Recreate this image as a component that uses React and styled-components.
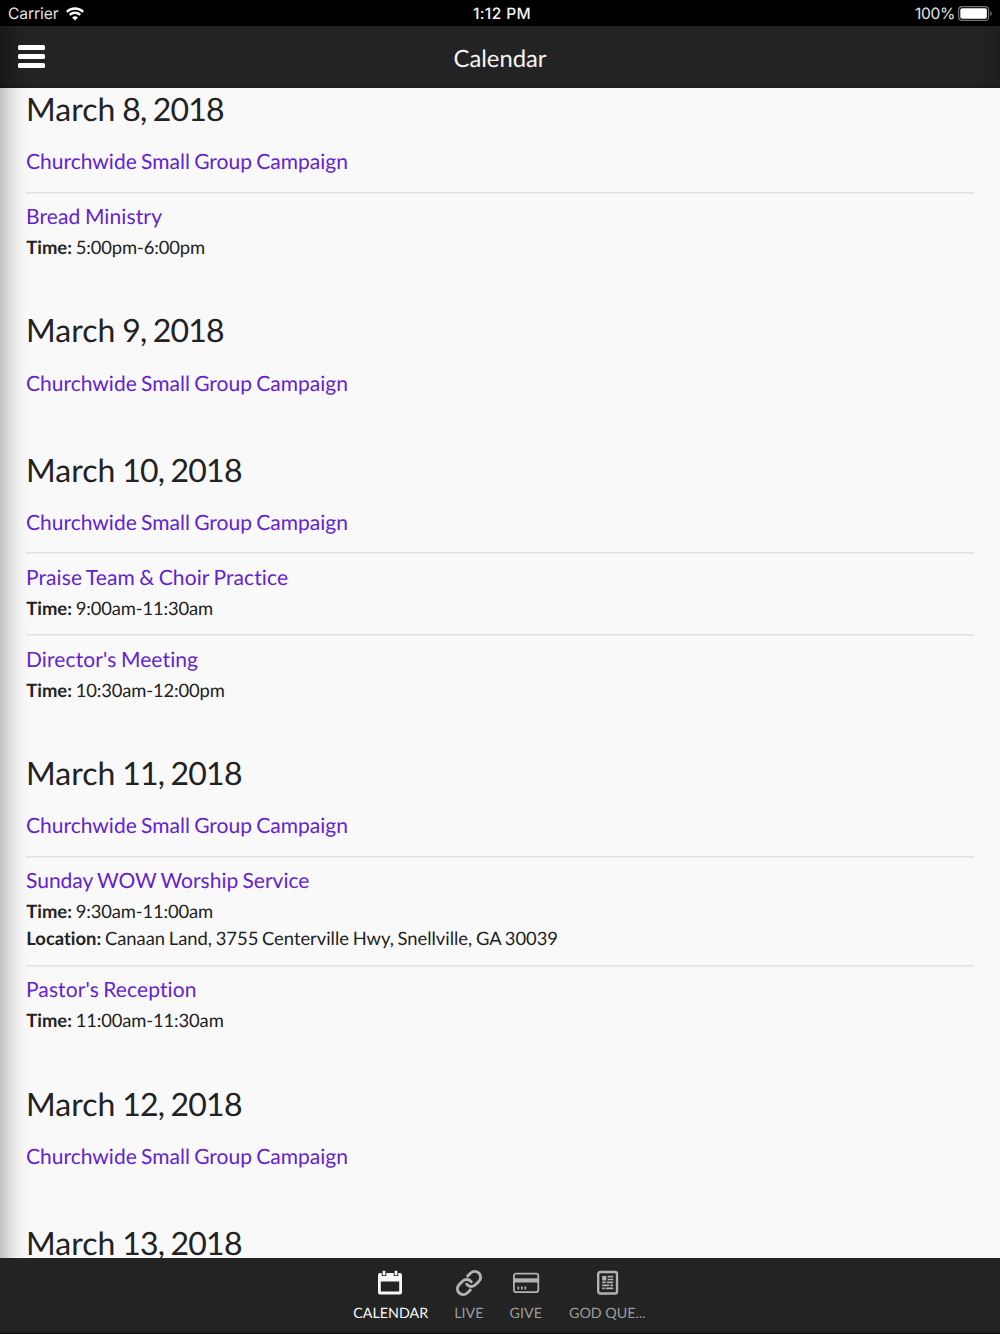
import React from "react";
import styled, { createGlobalStyle } from "styled-components";

const GlobalStyle = createGlobalStyle`
  *, *::before, *::after { box-sizing: border-box; }
  body {
    margin: 0;
    background: #f9f9f9;
    font-family: Lato, sans-serif;
    font-variant-ligatures: none;
    text-rendering: geometricPrecision;
    color: #222;
    overflow: hidden;
  }
`;

const Screen = styled.div`
  display: flex;
  flex-direction: column;
  width: 1000px;
  height: 1334px;
  overflow: hidden;
`;

const StatusBar = styled.div`
  display: grid;
  grid-template-columns: 1fr auto 1fr;
  align-items: center;
  flex: none;
  height: 26px;
  padding: 1px 7px 0 8px;
  background: #000;
  color: #e4e4e4;
  font: 400 15.6px/25px Inter, sans-serif;
`;

const StatusGroup = styled.div`
  display: flex;
  align-items: center;
  justify-content: ${(p) => (p.$end ? "flex-end" : "flex-start")};
  gap: ${(p) => (p.$end ? "3px" : "8px")};
  letter-spacing: ${(p) => (p.$end ? "-0.35px" : "-0.1px")};
`;

const Clock = styled.div`
  font-weight: 500;
  font-size: 15.5px;
  letter-spacing: 0.4px;
  color: #f4f4f4;
  padding-left: 3px;
`;

const Header = styled.header`
  display: grid;
  grid-template-columns: 1fr auto 1fr;
  align-items: center;
  flex: none;
  height: 62px;
  padding: 0 18px;
  background: linear-gradient(to right, #191919 0, #202020 18px, #232323 32px, #232323 970px, #1f1f1f 100%);
  box-shadow: inset 0 -5px 5px -4px rgba(0, 0, 0, 0.18);
`;

const MenuButton = styled.button`
  display: flex;
  flex-direction: column;
  gap: 4px;
  width: 27px;
  padding: 0;
  margin-top: -1px;
  border: 0;
  background: none;
`;

const MenuLine = styled.span`
  height: 5px;
  border-radius: 1.5px;
  background: #fff;
`;

const Title = styled.h1`
  margin: 4px 0 0;
  font-size: 23.8px;
  font-weight: 400;
  line-height: 30px;
  color: #f4f4f4;
`;

const Content = styled.main`
  flex: 1;
  min-height: 0;
  overflow: hidden;
  padding: 0 26px;
  background: linear-gradient(to right, #c2c2c2 0, #d0d0d0 5px, #e1e1e1 11px, #efefef 18px, #f7f7f7 25px, #f9f9f9 32px);
`;

const Day = styled.section`
  padding-bottom: 34.75px;
  &:first-child { margin-top: -1px; }
`;

const DayHeading = styled.h2`
  margin: 0;
  height: 50px;
  font-size: 32px;
  font-weight: 400;
  line-height: 43px;
  word-spacing: -0.035em;
`;

const DayNumber = styled.span`
  letter-spacing: -0.8px;
  word-spacing: -0.035em;
`;

const Event = styled.article`
  padding: 8.3px 0 12.65px;
  & + & { box-shadow: inset 0 1.5px 0 #e1e1e1; }
`;

const EventTitle = styled.h3`
  margin: 0;
  font-size: 21px;
  font-weight: 400;
  line-height: 33.7px;
  letter-spacing: ${(p) => p.$tracking || 0}px;
  word-spacing: -0.05em;
  color: #6422cf;
`;

const Detail = styled.p`
  margin: 0;
  padding-left: 0.3px;
  font-size: 18.4px;
  line-height: 27.35px;
  word-spacing: -0.05em;
  &:last-child { margin-bottom: -0.3px; }
  ${EventTitle} + & { margin-top: 0.3px; }
`;

const DetailValue = styled.span`
  letter-spacing: ${(p) => (p.$numeric ? "-0.13px" : "-0.03px")};
`;

const TabBar = styled.nav`
  display: flex;
  justify-content: center;
  flex: none;
  height: 76px;
  gap: 26px;
  padding: 11px 1px 0 0;
  background: #232323;
  border-bottom: 1px solid #0a0a0a;
`;

const Tab = styled.div`
  display: flex;
  flex-direction: column;
  align-items: center;
  font-size: 14.3px;
  line-height: 20px;
  color: ${(p) => (p.$active ? "#f8f8f8" : "#9c9c9c")};
  svg { display: block; margin-bottom: 7px; }
  &:last-child { padding-left: 1px; }
`;

const WifiIcon = () => (
  <svg width="18" height="14" viewBox="0 0 18 14" fill="none" stroke="#fff" strokeWidth="2.3">
    <path d="M.8 4.8a11.8 11.8 0 0 1 16.4 0" />
    <path d="M3.7 7.9a7.6 7.6 0 0 1 10.6 0" />
    <path d="M9 13.5 6.1 10.6a4.2 4.2 0 0 1 5.8 0Z" fill="#fff" stroke="none" />
  </svg>
);

const BatteryIcon = () => (
  <svg width="35" height="15" viewBox="0 0 35 15">
    <rect x=".6" y=".6" width="30" height="13.8" rx="3.5" fill="none" stroke="#77777a" strokeWidth="1.2" />
    <rect x="2.3" y="2.3" width="26.6" height="10.4" rx="1.8" fill="#fff" />
    <path d="M32.3 5.2c2 .6 2 4 0 4.6Z" fill="#77777a" />
  </svg>
);

const CalendarIcon = () => (
  <svg width="26" height="28" viewBox="1 0 26 28">
    <path fill="currentColor" fillRule="evenodd" d="M3 4h20q2 0 2 2v17.5q0 2-2 2H3q-2 0-2-2V6q0-2 2-2Zm.8 8.500v10h18.400v-10Z" />
    <path d="M7 2.400v4.500M19 2.400v4.500" stroke="#232323" strokeWidth="4.600" />
    <path d="M7 1.800v4.500M19 1.800v4.500" stroke="currentColor" strokeWidth="2.700" />
  </svg>
);

const LinkIcon = () => (
  <svg width="28" height="28" viewBox="0 0 24 24" fill="none" stroke="#b2b2b2" strokeWidth="2.500" strokeLinecap="round">
    <path d="M10 13a5 5 0 0 0 7.540.540l3-3a5 5 0 0 0-7.070-7.070l-2.600 2.600" />
    <path d="M14 11a5 5 0 0 0-7.540-.540l-3 3a5 5 0 0 0 7.070 7.070l2.600-2.600" />
  </svg>
);

const CardIcon = () => (
  <svg width="28" height="28" viewBox="0 0 28 28">
    <rect x="1.900" y="4.700" width="24.400" height="18.400" rx="2" fill="none" stroke="#b2b2b2" strokeWidth="1.800" />
    <path d="M2 11.400h24" stroke="#b2b2b2" strokeWidth="4.200" />
    <path d="M5.500 19h1.700M9 19h1.700M12.500 19h1.700" stroke="#b2b2b2" strokeWidth="3" />
  </svg>
);

const NewsIcon = () => (
  <svg width="24" height="28" viewBox="-1 0 24 28" fill="none" stroke="#b2b2b2">
    <rect x="2.200" y="3" width="18.800" height="21.500" rx="2" strokeWidth="2.400" />
    <path d="M6.200 9.200h4.200" strokeWidth="4.600" />
    <path d="M11.700 7.700h5.500M11.700 10.500h5.500M6.200 13.300h3.500M10.700 13.300h6.500M6.200 16.300h7M14.200 16.300h3M6.200 19.300h2.500M9.700 19.300h7.500" strokeWidth="1.700" />
  </svg>
);

const campaign = { title: "Churchwide Small Group Campaign" };

const days = [
  {
    month: "March",
    rest: "8, 2018",
    events: [campaign, { title: "Bread Ministry", time: "5:00pm-6:00pm", tracking: 0.12 }],
  },
  { month: "March", rest: "9, 2018", events: [campaign] },
  {
    month: "March",
    rest: "10, 2018",
    events: [
      campaign,
      { title: "Praise Team & Choir Practice", time: "9:00am-11:30am", tracking: 0.09 },
      { title: "Director's Meeting", time: "10:30am-12:00pm", tracking: 0.11 },
    ],
  },
  {
    month: "March",
    rest: "11, 2018",
    events: [
      campaign,
      {
        title: "Sunday WOW Worship Service",
        time: "9:30am-11:00am",
        location: "Canaan Land, 3755 Centerville Hwy, Snellville, GA 30039",
      },
      { title: "Pastor's Reception", time: "11:00am-11:30am", tracking: 0.1 },
    ],
  },
  { month: "March", rest: "12, 2018", events: [campaign] },
  { month: "March", rest: "13, 2018", events: [] },
];

const tabs = [
  { label: "CALENDAR", Icon: CalendarIcon, active: true },
  { label: "LIVE", Icon: LinkIcon },
  { label: "GIVE", Icon: CardIcon },
  { label: "GOD QUE...", Icon: NewsIcon },
];

export default function App() {
  return (
    <Screen>
      <GlobalStyle />
      <StatusBar>
        <StatusGroup>Carrier <WifiIcon /></StatusGroup>
        <Clock>1:12 PM</Clock>
        <StatusGroup $end>100% <BatteryIcon /></StatusGroup>
      </StatusBar>
      <Header>
        <MenuButton aria-label="Menu"><MenuLine /><MenuLine /><MenuLine /></MenuButton>
        <Title>Calendar</Title>
      </Header>
      <Content>
        {days.map((day) => (
          <Day key={day.rest}>
            <DayHeading>{day.month} <DayNumber>{day.rest}</DayNumber></DayHeading>
            {day.events.map((event) => (
              <Event key={event.title}>
                <EventTitle $tracking={event.tracking}>{event.title}</EventTitle>
                {event.time && <Detail><b>Time:</b> <DetailValue $numeric>{event.time}</DetailValue></Detail>}
                {event.location && <Detail><b>Location:</b> <DetailValue>{event.location}</DetailValue></Detail>}
              </Event>
            ))}
          </Day>
        ))}
      </Content>
      <TabBar>
        {tabs.map(({ label, Icon, active }) => (
          <Tab key={label} $active={active}><Icon />{label}</Tab>
        ))}
      </TabBar>
    </Screen>
  );
}
